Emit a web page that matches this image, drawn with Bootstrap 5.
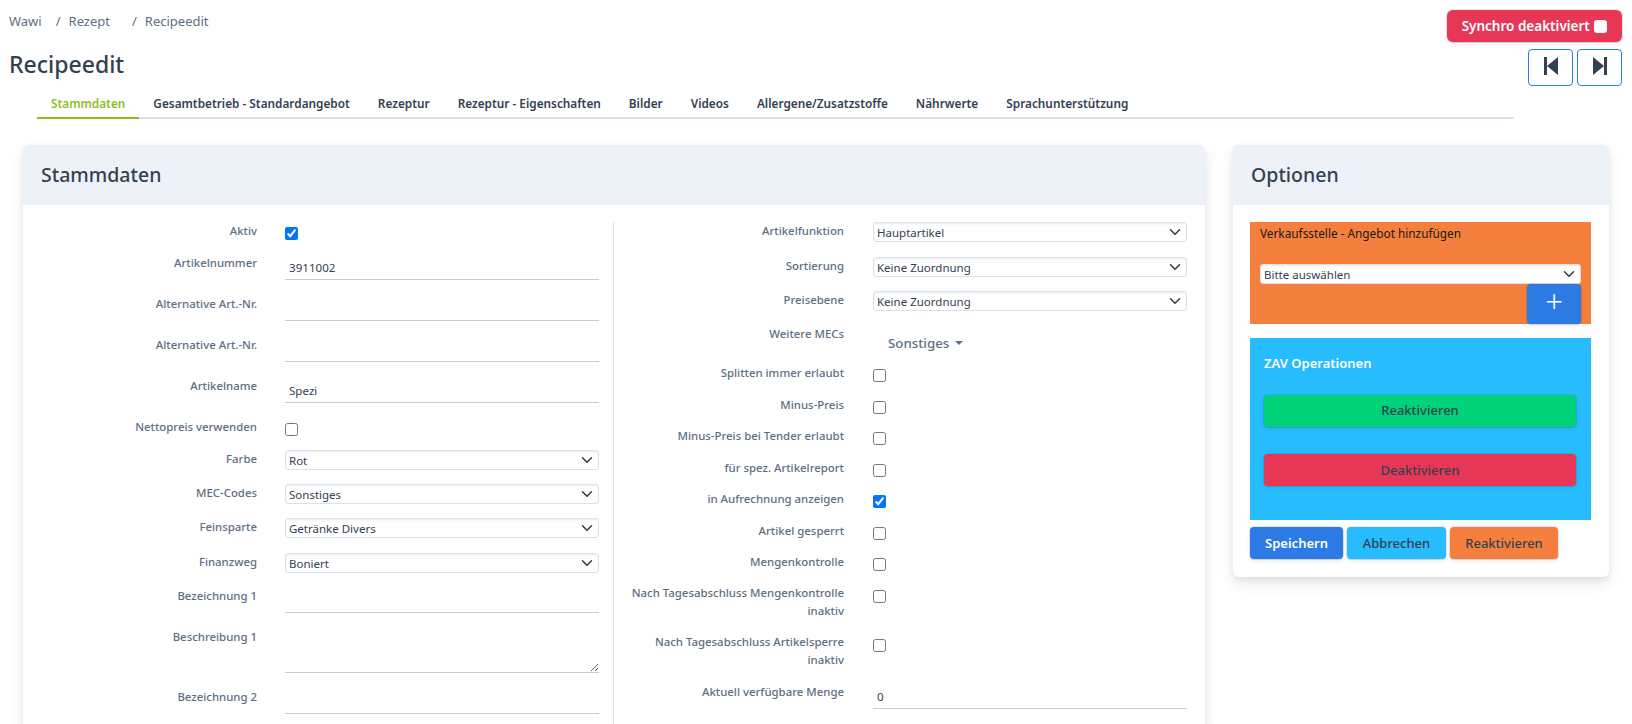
<!DOCTYPE html>
<html lang="de"><head><meta charset="utf-8"><title>Recipeedit</title>
<link href="https://cdn.jsdelivr.net/npm/bootstrap@5.3.0/dist/css/bootstrap.min.css" rel="stylesheet">
<style>
html,body{height:724px;overflow:hidden;background:#fff}
body{font-family:"Noto Sans","Open Sans",sans-serif;color:#5e6e82;font-size:12px}
.topzone{height:88px;padding:0 10px 2px 9px}
.crumbs{--bs-breadcrumb-divider:"/";margin:0;padding-top:12px;font-size:13px;line-height:18px}
.crumbs .breadcrumb-item,.crumbs a{color:#5e6e82;text-decoration:none}
.crumbs .breadcrumb-item+.breadcrumb-item{padding-left:0}
.crumbs .breadcrumb-item+.breadcrumb-item::before{color:#5e6e82;padding-right:8px}
.gap-a{margin-left:14px}.gap-b{margin-left:22px}
.pagetitle{font-size:23px;font-weight:500;color:#344050;margin:18px 0 0;line-height:32px}
.synchro{width:175px;height:32px;margin-top:10px;background:#e63757;border:0;color:#fff;font-weight:600;font-size:13.5px;padding:0;line-height:32px}
.synchro:hover{background:#e63757;color:#fff}
.tick{display:inline-block;width:13px;height:13px;background:#fff;border-radius:3px;vertical-align:-2px;margin-left:1px}
.pager{width:45px;height:37px;padding:0;background:#fff;border:1px solid #2c7be5;border-radius:4px}
.pager svg{display:block;margin:-3px auto 0}
.tabbar{margin-left:37px;width:1477px;height:31px;border-bottom:2px solid #d8e2ef;flex-wrap:nowrap}
.tabbar .nav-link{padding:0 14px;height:31px;line-height:30px;font-size:11.8px;font-weight:600;color:#344050;border:0;border-bottom:2px solid transparent;border-radius:0;white-space:nowrap}
.tabbar .nav-link.active{color:#8cbf1e;border-bottom-color:#8cbf1e}
.maincols{padding-left:23px;margin-top:26px;gap:28px;align-items:flex-start}
.panel{border:0;border-radius:6px;box-shadow:0 7px 14px rgba(65,69,88,.1),0 3px 6px rgba(0,0,0,.07);overflow:hidden}
.panel-wide{width:1182px}.panel-side{width:376px}
.panel-head{height:60px;background:#edf2f9;color:#344050;font-size:19.5px;font-weight:500;padding:0 18px;line-height:60px}
.fcols{padding:17px 0 0 19px}
.fcol-l{width:572px;padding-right:15px;border-right:1px solid #d8e2ef}
.fcol-r{width:572px;padding-left:15px}
.frow{display:flex;gap:28px}
.fcol-r .frow{gap:29px}
.flabel{width:215px;flex:none;text-align:right;font-weight:500;line-height:17.5px;margin:0;color:#5e6e82;font-size:11.4px}
.fctl{width:314px;flex:none}
.fctl input[type=checkbox]{display:block;margin:5px 0 0 0;width:13px;height:13px}
.fctl input.low[type=checkbox]{margin-top:6px}
.r31{height:31px}.r32{height:32px}.r34{height:34px}.r35{height:35px}.r39{height:39px}.r41{height:41px}.r49{height:49px}.r50{height:50px}.r60{height:60px}
.lineinput{height:26px;border:0;border-bottom:1px solid #ccc;border-radius:0;padding:2px 4px 0;font-size:11.6px;color:#344050;box-shadow:none;background:#fff}
.lineinput.tall{height:45px;resize:both}
.pick{height:20px;min-height:0;padding:1px 20px 0 3px;font-size:11.5px;line-height:18px;color:#344050;border:1px solid #d8e2ef;border-radius:3px;box-shadow:inset 0 1px 2px rgba(0,0,0,.075);background-position:right 3px center;background-size:16px 12px}
.sonst{margin:9px 0 0 15px;padding:0;border:0;background:none;font-size:13.3px;color:#5e6e82;font-weight:500;line-height:18px}
.sonst::after{margin-left:.4em;border-top-width:.36em;border-left-width:.36em;border-right-width:.36em}
.sidebody{padding:17px 18px 18px 17px}
.orangebox{height:102px;background:#f5803e;padding:3px 10px;color:#1a1a1a;font-size:11.8px}
.orangebox p{margin:0 0 22px;line-height:17px}
.plusbtn{display:block;margin-left:auto;width:54px;height:40px;background:#2c7be5;border:0;border-radius:4px;color:#fff;font-size:31px;font-weight:300;line-height:32px;padding:0 0 6px}
.bluebox{margin-top:14px;height:182px;background:#27bcfd;padding:16px 15px 0 14px}
.bluebox h6{color:#fff;font-weight:600;font-size:13px;margin:0 0 22px;line-height:18px}
.opbtn{display:block;width:100%;height:32px;border:0;border-radius:4px;color:#344050;font-size:13px;font-weight:500;padding:0}
.opbtn:hover{color:#344050}
.c-green,.c-green:hover{background:#00d27a;margin-top:23px}.c-red,.c-red:hover{background:#e63757;margin-top:27px;padding-top:1px}
.footbtns{margin-top:7px;gap:4px}
.footbtn{height:32px;border:0;border-radius:4px;font-size:13px;font-weight:500;color:#344050;padding:2px 0 0}
.fb-s,.fb-s:hover{width:93px;background:#2c7be5;color:#fff;font-weight:600}
.fb-a,.fb-a:hover{width:99px;background:#27bcfd;color:#344050}
.fb-r,.fb-r:hover{width:108px;background:#f5803e;color:#344050}
.shadowed{box-shadow:0 0 0 1px rgba(43,45,80,.1),0 2px 5px 0 rgba(43,45,80,.08),0 1px 1.5px 0 rgba(0,0,0,.07)}
</style></head><body>
<div class="topzone d-flex justify-content-between">
  <div>
    <ol class="breadcrumb crumbs">
      <li class="breadcrumb-item"><a href="#">Wawi</a></li>
      <li class="breadcrumb-item gap-a"><a href="#">Rezept</a></li>
      <li class="breadcrumb-item gap-b active">Recipeedit</li>
    </ol>
    <h1 class="pagetitle">Recipeedit</h1>
  </div>
  <div class="d-flex flex-column align-items-end">
    <button class="btn synchro shadowed">Synchro deaktiviert <span class="tick"></span></button>
    <div class="d-flex gap-1 mt-auto">
      <button class="btn pager" aria-label="Zurück"><svg width="18" height="18" viewBox="0 0 18 18"><path fill="#344050" d="M2 0h3v18H2zM16 0v18L5 9z"/></svg></button>
      <button class="btn pager" aria-label="Weiter"><svg width="18" height="18" viewBox="0 0 18 18"><path fill="#344050" d="M16 0h-3v18h3zM2 0v18l11-9z"/></svg></button>
    </div>
  </div>
</div>
<ul class="nav tabbar">
  <li class="nav-item"><a class="nav-link active" href="#">Stammdaten</a></li>
  <li class="nav-item"><a class="nav-link" href="#">Gesamtbetrieb - Standardangebot</a></li>
  <li class="nav-item"><a class="nav-link" href="#">Rezeptur</a></li>
  <li class="nav-item"><a class="nav-link" href="#">Rezeptur - Eigenschaften</a></li>
  <li class="nav-item"><a class="nav-link" href="#">Bilder</a></li>
  <li class="nav-item"><a class="nav-link" href="#">Videos</a></li>
  <li class="nav-item"><a class="nav-link" href="#">Allergene/Zusatzstoffe</a></li>
  <li class="nav-item"><a class="nav-link" href="#">Nährwerte</a></li>
  <li class="nav-item"><a class="nav-link" href="#">Sprachunterstützung</a></li>
</ul>
<div class="d-flex maincols">
  <div class="card panel panel-wide">
    <div class="panel-head">Stammdaten</div>
    <div class="d-flex fcols">
      <div class="fcol-l">
        <div class="frow r32"><label class="flabel">Aktiv</label><div class="fctl"><input type="checkbox" checked></div></div>
        <div class="frow r41"><label class="flabel">Artikelnummer</label><div class="fctl"><input class="form-control lineinput" value="3911002"></div></div>
        <div class="frow r41"><label class="flabel">Alternative Art.-Nr.</label><div class="fctl"><input class="form-control lineinput"></div></div>
        <div class="frow r41"><label class="flabel">Alternative Art.-Nr.</label><div class="fctl"><input class="form-control lineinput"></div></div>
        <div class="frow r41"><label class="flabel">Artikelname</label><div class="fctl"><input class="form-control lineinput" value="Spezi"></div></div>
        <div class="frow r32"><label class="flabel">Nettopreis verwenden</label><div class="fctl"><input type="checkbox"></div></div>
        <div class="frow r34"><label class="flabel">Farbe</label><div class="fctl"><select class="form-select pick"><option>Rot</option></select></div></div>
        <div class="frow r34"><label class="flabel">MEC-Codes</label><div class="fctl"><select class="form-select pick"><option>Sonstiges</option></select></div></div>
        <div class="frow r35"><label class="flabel">Feinsparte</label><div class="fctl"><select class="form-select pick"><option>Getränke Divers</option></select></div></div>
        <div class="frow r34"><label class="flabel">Finanzweg</label><div class="fctl"><select class="form-select pick"><option>Boniert</option></select></div></div>
        <div class="frow r41"><label class="flabel">Bezeichnung 1</label><div class="fctl"><input class="form-control lineinput"></div></div>
        <div class="frow r60"><label class="flabel">Beschreibung 1</label><div class="fctl"><textarea class="form-control lineinput tall"></textarea></div></div>
        <div class="frow r41"><label class="flabel">Bezeichnung 2</label><div class="fctl"><input class="form-control lineinput"></div></div>
      </div>
      <div class="fcol-r">
        <div class="frow r35"><label class="flabel">Artikelfunktion</label><div class="fctl"><select class="form-select pick"><option>Hauptartikel</option></select></div></div>
        <div class="frow r34"><label class="flabel">Sortierung</label><div class="fctl"><select class="form-select pick"><option>Keine Zuordnung</option></select></div></div>
        <div class="frow r34"><label class="flabel">Preisebene</label><div class="fctl"><select class="form-select pick"><option>Keine Zuordnung</option></select></div></div>
        <div class="frow r39"><label class="flabel">Weitere MECs</label><div class="fctl"><button class="dropdown-toggle sonst">Sonstiges</button></div></div>
        <div class="frow r32"><label class="flabel">Splitten immer erlaubt</label><div class="fctl"><input type="checkbox"></div></div>
        <div class="frow r31"><label class="flabel">Minus-Preis</label><div class="fctl"><input type="checkbox"></div></div>
        <div class="frow r32"><label class="flabel">Minus-Preis bei Tender erlaubt</label><div class="fctl"><input type="checkbox"></div></div>
        <div class="frow r31"><label class="flabel">für spez. Artikelreport</label><div class="fctl"><input type="checkbox"></div></div>
        <div class="frow r32"><label class="flabel">in Aufrechnung anzeigen</label><div class="fctl"><input type="checkbox" checked></div></div>
        <div class="frow r31"><label class="flabel">Artikel gesperrt</label><div class="fctl"><input type="checkbox"></div></div>
        <div class="frow r31"><label class="flabel">Mengenkontrolle</label><div class="fctl"><input type="checkbox"></div></div>
        <div class="frow r49"><label class="flabel">Nach Tagesabschluss Mengenkontrolle inaktiv</label><div class="fctl"><input class="low" type="checkbox"></div></div>
        <div class="frow r50"><label class="flabel">Nach Tagesabschluss Artikelsperre inaktiv</label><div class="fctl"><input class="low" type="checkbox"></div></div>
        <div class="frow r41"><label class="flabel">Aktuell verfügbare Menge</label><div class="fctl"><input class="form-control lineinput" value="0"></div></div>
      </div>
    </div>
  </div>
  <div class="card panel panel-side">
    <div class="panel-head">Optionen</div>
    <div class="sidebody">
      <div class="orangebox">
        <p>Verkaufsstelle - Angebot hinzufügen</p>
        <select class="form-select pick"><option>Bitte auswählen</option></select>
        <button class="plusbtn shadowed">+</button>
      </div>
      <div class="bluebox">
        <h6>ZAV Operationen</h6>
        <button class="btn opbtn c-green shadowed">Reaktivieren</button>
        <button class="btn opbtn c-red shadowed">Deaktivieren</button>
      </div>
      <div class="d-flex footbtns">
        <button class="btn footbtn fb-s shadowed">Speichern</button>
        <button class="btn footbtn fb-a shadowed">Abbrechen</button>
        <button class="btn footbtn fb-r shadowed">Reaktivieren</button>
      </div>
    </div>
  </div>
</div>
<script src="https://cdn.jsdelivr.net/npm/bootstrap@5.3.0/dist/js/bootstrap.bundle.min.js"></script>
</body></html>
